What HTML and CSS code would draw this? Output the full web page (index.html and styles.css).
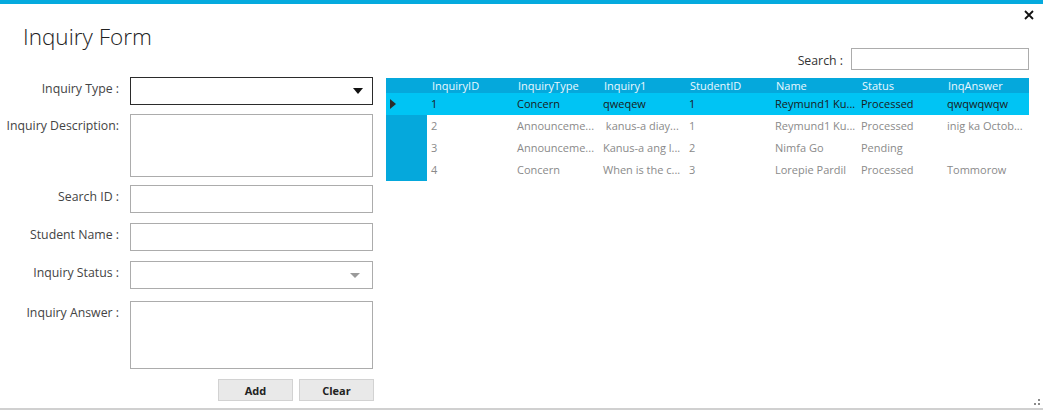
FILE: index.html
```html
<!DOCTYPE html>
<html>
<head>
<meta charset="utf-8">
<link rel="stylesheet" href="styles.css">
</head>
<body>
<div class="window">
  <div class="topbar"></div>
  <button class="close" aria-label="Close">
    <svg width="10" height="10" viewBox="0 0 10 10"><path d="M1 1 L9 9 M9 1 L1 9" stroke="#111" stroke-width="1.8" fill="none"/></svg>
  </button>
  <div class="content">
    <section class="form-panel">
      <h1 class="title">Inquiry Form</h1>
      <div class="fields">
        <div class="row row-type">
          <label class="lbl">Inquiry Type :</label>
          <div class="field combo combo-active"><span class="arrow arrow-dark"></span></div>
        </div>
        <div class="row row-desc">
          <label class="lbl lbl-desc">Inquiry Description:</label>
          <div class="field area area-desc"></div>
        </div>
        <div class="row row-sid">
          <label class="lbl">Search ID :</label>
          <div class="field input"></div>
        </div>
        <div class="row row-name">
          <label class="lbl">Student Name :</label>
          <div class="field input"></div>
        </div>
        <div class="row row-status">
          <label class="lbl">Inquiry Status :</label>
          <div class="field combo"><span class="arrow arrow-grey"></span></div>
        </div>
        <div class="row row-answer">
          <label class="lbl">Inquiry Answer :</label>
          <div class="field area area-answer"></div>
        </div>
        <div class="actions">
          <button class="btn">Add</button>
          <button class="btn">Clear</button>
        </div>
      </div>
    </section>
    <section class="grid-panel">
      <div class="search">
        <label class="search-lbl">Search :</label>
        <div class="search-input"></div>
      </div>
      <div class="grid">
        <div class="rh hdr"></div>
        <div class="hc">InquiryID</div>
        <div class="hc">InquiryType</div>
        <div class="hc">Inquiry1</div>
        <div class="hc">StudentID</div>
        <div class="hc">Name</div>
        <div class="hc">Status</div>
        <div class="hc">InqAnswer</div>

        <div class="rh sel"><span class="pointer"></span></div>
        <div class="c sel">1</div>
        <div class="c sel">Concern</div>
        <div class="c sel">qweqew</div>
        <div class="c sel">1</div>
        <div class="c sel">Reymund1 Ku...</div>
        <div class="c sel">Processed</div>
        <div class="c sel">qwqwqwqw</div>

        <div class="rh"></div>
        <div class="c">2</div>
        <div class="c">Announceme...</div>
        <div class="c"> kanus-a diay...</div>
        <div class="c">1</div>
        <div class="c">Reymund1 Ku...</div>
        <div class="c">Processed</div>
        <div class="c">inig ka Octob...</div>

        <div class="rh"></div>
        <div class="c">3</div>
        <div class="c">Announceme...</div>
        <div class="c">Kanus-a ang l...</div>
        <div class="c">2</div>
        <div class="c">Nimfa Go</div>
        <div class="c">Pending</div>
        <div class="c"></div>

        <div class="rh"></div>
        <div class="c">4</div>
        <div class="c">Concern</div>
        <div class="c">When is the c...</div>
        <div class="c">3</div>
        <div class="c">Lorepie Pardil</div>
        <div class="c">Processed</div>
        <div class="c">Tommorow</div>
      </div>
    </section>
  </div>
  <div class="footer-line"></div>
  <svg class="grip" width="8" height="8" viewBox="0 0 8 8">
    <rect x="5" y="1" width="2" height="2" fill="#8a8a8a"/>
    <rect x="1" y="5" width="2" height="2" fill="#8a8a8a"/>
    <rect x="5" y="5" width="2" height="2" fill="#8a8a8a"/>
  </svg>
</div>
</body>
</html>
```

FILE: styles.css
```css
* { box-sizing: border-box; }
html, body { margin: 0; padding: 0; background: #fff; }
body { font-family: "Open Sans", "Noto Sans", sans-serif; color: #333; }

.window {
  position: relative;
  width: 1043px;
  height: 412px;
  overflow: hidden;
  background: #fff;
}

.topbar { height: 4px; background: #05aade; }

.close {
  position: absolute;
  top: 9px;
  right: 8px;
  width: 12px;
  height: 12px;
  padding: 0;
  border: 0;
  background: transparent;
  display: flex;
  align-items: center;
  justify-content: center;
}

.content { display: flex; height: 404px; }

.form-panel { width: 386px; flex: none; }

.title {
  margin: 17px 0 0 23px;
  font-size: 22.5px;
  font-weight: 300;
  line-height: 32px;
  color: #222;
}

.fields { margin-top: 24px; }

.row { display: flex; align-items: flex-start; }
.row-desc { margin-top: 9px; }
.row-sid { margin-top: 8px; }
.row-name { margin-top: 10px; }
.row-status { margin-top: 10px; }
.row-answer { margin-top: 12px; }

.lbl {
  width: 120px;
  flex: none;
  text-align: right;
  font-size: 12.3px;
  line-height: 16px;
  padding-top: 4px;
  padding-right: 1px;
  color: #444;
  white-space: nowrap;
}
.lbl-desc { padding-top: 4px; }

.field {
  margin-left: 10px;
  width: 243px;
  border: 1px solid #acacac;
  background: #fff;
}
.input, .combo { height: 28px; }
.combo { display: flex; align-items: center; justify-content: flex-end; padding-right: 9px; }
.combo-active { border-color: #2b2b2b; }
.area-desc { height: 63px; }
.area-answer { height: 68px; }

.arrow {
  width: 0;
  height: 0;
  border-left: 5px solid transparent;
  border-right: 5px solid transparent;
}
.arrow-dark { border-top: 6px solid #111; }
.arrow-grey { border-top: 5px solid #9a9a9a; margin-right: 3px; }

.actions {
  display: flex;
  gap: 6px;
  margin: 10px 0 0 218px;
}
.btn {
  width: 75px;
  height: 22px;
  border: 1px solid #d2d2d2;
  background: #e9e9e9;
  font-family: "Open Sans", "Noto Sans", sans-serif;
  font-size: 11px;
  font-weight: 700;
  color: #222;
  padding: 0;
}

.grid-panel { width: 643px; flex: none; }

.search {
  display: flex;
  justify-content: flex-end;
  align-items: center;
  margin-top: 44px;
}
.search-lbl { font-size: 12.3px; color: #333; margin-right: 8px; padding-top: 2px; }
.search-input { width: 178px; height: 22px; border: 1px solid #acacac; }

.grid {
  margin-top: 8px;
  display: grid;
  grid-template-columns: 41px repeat(7, 86px);
  grid-template-rows: 15px repeat(4, 22px);
  font-size: 11px;
}

.rh { background: #05a8dc; position: relative; }
.rh.sel { background: #00c4f4; }
.hdr { background: #05a8dc; }

.hc {
  background: #05a8dc;
  color: #eaf8ff;
  padding-left: 5px;
  line-height: 15px;
  white-space: nowrap;
  overflow: hidden;
}

.c {
  color: #8a8a8a;
  padding-left: 4px;
  line-height: 22px;
  white-space: pre;
  overflow: hidden;
}
.c.sel { background: #00c4f4; color: #1a1a1a; }

.pointer {
  position: absolute;
  left: 4px;
  top: 6px;
  width: 0;
  height: 0;
  border-top: 5px solid transparent;
  border-bottom: 5px solid transparent;
  border-left: 6px solid #2c2c2c;
}

.footer-line {
  position: absolute;
  left: 0;
  right: 0;
  bottom: 2px;
  height: 2px;
  background: #d0d0d0;
}

.grip { position: absolute; right: 2px; bottom: 6px; }
```
